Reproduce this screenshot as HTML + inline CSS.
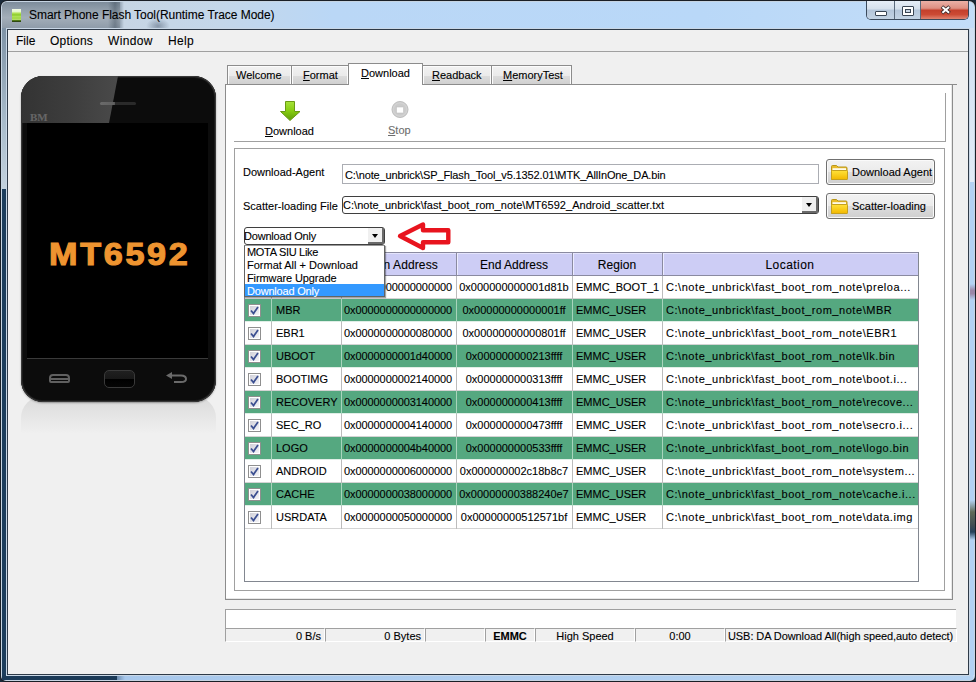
<!DOCTYPE html>
<html><head><meta charset="utf-8">
<style>
*{margin:0;padding:0;box-sizing:border-box}
html,body{width:976px;height:682px;overflow:hidden;background:#1a2a3a}
body{position:relative;font-family:"Liberation Sans",sans-serif;font-size:11px;color:#000}
.a{position:absolute}
.t{position:absolute;white-space:nowrap;line-height:1;-webkit-text-stroke:0.1px currentColor}
</style></head><body>

<!-- window frame -->
<div class="a" id="frame" style="left:0;top:0;width:976px;height:682px;border-radius:7px 7px 6px 6px;background:#1a1f26"></div>
<div class="a" style="left:1px;top:1px;width:974px;height:680px;border-radius:6px 6px 5px 5px;background:#c6d4e2"></div>
<!-- glass -->
<div class="a" id="glass" style="left:2px;top:2px;width:972px;height:678px;border-radius:5px 5px 4px 4px;
 background:linear-gradient(90deg,#7f909f 0px,#8e9dab 60px,#95a3b0 108px,#6f7f8f 115px,#c6d5e4 122px,#c4d7ea 220px,#bad7f6 330px,#b9d8f8 700px,#c3ddf8 976px)"></div>
<div class="a" style="left:2px;top:2px;width:118px;height:26px;border-radius:5px 0 0 0;background:linear-gradient(90deg,rgba(0,0,0,0) 0,rgba(0,0,0,0) 106px,rgba(40,55,70,.35) 113px,rgba(40,55,70,0) 120px),linear-gradient(#7d8c9b 0,#95a2ae 35%,#a3aeb9 60%,#8f9ca9 100%)"></div>
<div class="a" style="left:146px;top:18px;width:24px;height:10px;background:radial-gradient(ellipse at 50% 80%,rgba(60,75,95,.45),rgba(60,75,95,0) 70%)"></div>
<!-- left & bottom-left dark glass -->
<div class="a" style="left:2px;top:28px;width:5px;height:161px;background:linear-gradient(#7f93a6,#a9bccb 60%,#c3d2de)"></div>
<div class="a" style="left:2px;top:189px;width:5px;height:491px;background:#1c3d5c"></div>
<div class="a" style="left:2px;top:675px;width:115px;height:5px;background:#1b3a58"></div>
<div class="a" style="left:117px;top:675px;width:856px;height:5px;background:linear-gradient(90deg,#6d8db0 0,#a8c8ec 8px,#b5d3f2 100%)"></div>
<div class="a" style="left:969px;top:28px;width:5px;height:154px;background:linear-gradient(#d0e0f2,#e2ecf7)"></div>
<div class="a" style="left:969px;top:182px;width:5px;height:493px;background:#b3d2f3"></div>

<div class="a" style="left:969px;top:284px;width:6px;height:16px;background:linear-gradient(#b3d2f3,#9a86a8 40%,#9a86a8 60%,#b3d2f3)"></div>
<div class="a" style="left:969px;top:500px;width:6px;height:40px;background:linear-gradient(#b3d2f3,#5e6a58 30%,#3e4a52 65%,#24405a 80%,#b3d2f3)"></div>
<!-- client area -->
<div class="a" id="client" style="left:6px;top:28px;width:964px;height:648px;border:1px solid #c9d7e6"></div>
<div class="a" style="left:7px;top:29px;width:962px;height:646px;border:1px solid #2e3a48;background:#f0f0f0"></div>

<!-- title -->
<div class="a" style="left:12px;top:9px;width:9px;height:13px;background:linear-gradient(#f2fbe6 0,#e4f6c8 22%,#b8e660 30%,#8ccc2a 45%,#b4e45c 60%,#9ad438 70%,#c0ea70 80%,#5c8a1a 86%,#1e3010 100%)"></div>
<div class="t" style="left:29px;top:9px;font-size:12px;color:#000;letter-spacing:-0.04px">Smart Phone Flash Tool(Runtime Trace Mode)</div>

<!-- menu -->
<div class="t" style="left:16px;top:35px;font-size:12px">File</div>
<div class="t" style="left:50px;top:35px;font-size:12px;letter-spacing:0.25px">Options</div>
<div class="t" style="left:108px;top:35px;font-size:12px;letter-spacing:0.35px">Window</div>
<div class="t" style="left:168px;top:35px;font-size:12px;letter-spacing:0.3px">Help</div>
<div class="a" style="left:8px;top:51px;width:960px;height:1px;background:#a0a0a0"></div>


<!-- caption buttons -->
<div class="a" style="left:866px;top:1px;width:103px;height:19px;border:1px solid #3b4a5c;border-top:none;border-radius:0 0 5px 5px;overflow:hidden">
 <div class="a" style="left:0;top:0;width:28px;height:18px;background:linear-gradient(#e6eef7 0,#d5e0ec 45%,#b4c6da 50%,#c3d3e4 100%);border-right:1px solid #5a6a7c"></div>
 <div class="a" style="left:28px;top:0;width:26px;height:18px;background:linear-gradient(#e6eef7 0,#d5e0ec 45%,#b4c6da 50%,#c3d3e4 100%);border-right:1px solid #5a6a7c"></div>
 <div class="a" style="left:54px;top:0;width:48px;height:18px;background:linear-gradient(#eab0a6 0,#de9082 40%,#c4402c 52%,#cc4a34 75%,#e08470 100%)"></div>
 <div class="a" style="left:8px;top:10px;width:12px;height:5px;background:#fff;border:1px solid #3a4654;border-radius:1px"></div>
 <div class="a" style="left:35px;top:5px;width:12px;height:10px;background:#fff;border:1px solid #3a4654;border-radius:1px"></div>
 <div class="a" style="left:38px;top:8px;width:6px;height:4px;background:#c9d6e4;border:1px solid #3a4654"></div>
 <svg class="a" style="left:73px;top:4px" width="12" height="11" viewBox="0 0 12 11"><path d="M1.9 1.6 L9.6 8.1 M9.6 1.6 L1.9 8.1" stroke="#3a2a2a" stroke-width="3.7" stroke-linecap="butt"/><path d="M2.4 2 L9.1 7.7 M9.1 2 L2.4 7.7" stroke="#fff" stroke-width="2.0" stroke-linecap="butt"/></svg>
</div>

<!-- phone -->
<div class="a" style="left:21px;top:396px;width:195px;height:38px;background:linear-gradient(#d8d8d8 0,#dedede 20%,#e6e6e6 55%,#f0f0f0 100%);border-radius:22px 22px 0 0"></div>
<div class="a" style="left:21px;top:76px;width:195px;height:326px;border-radius:22px;background:#0c0c0c;box-shadow:inset 0 0 0 1px #3a3a3a, inset 0 0 0 2px #1a1a1a, 0 1px 2px rgba(0,0,0,.35);overflow:hidden">
 <div class="a" style="left:0;top:0;width:98px;height:47px;background:linear-gradient(90deg,#333 0,#3d3d3d 50%,#4a4a4a 100%);clip-path:polygon(0 0,97px 0,88px 47px,0 47px)"></div>
 <div class="a" style="left:79px;top:26px;width:36px;height:3px;border-radius:2px;background:linear-gradient(90deg,#6a6a6a 0,#606060 40%,#2a2a2a 42%,#2a2a2a 100%)"></div>
 <div class="t" style="left:9px;top:36px;font-family:'Liberation Serif',serif;font-weight:bold;font-size:11px;color:#666">BM</div>
 <div class="a" style="left:6px;top:47px;width:181px;height:236px;background:#000;border-bottom:1px solid #3a3a3a"></div>
 <div class="t" style="left:28px;top:163px;font-weight:bold;font-size:30.5px;letter-spacing:2.4px;color:#ee9430;transform:scaleX(1.12);transform-origin:0 0;-webkit-text-stroke:1.1px #ee9430">MT6592</div>
 <!-- menu icon -->
 <div class="a" style="left:28px;top:298px;width:21px;height:9px;border:2px solid #606060;border-radius:4px 4px 2px 2px"></div>
 <div class="a" style="left:30px;top:302px;width:17px;height:2px;background:#606060"></div>
 <!-- home -->
 <div class="a" style="left:83px;top:294px;width:31px;height:18px;border:1px solid #3a3a3a;border-radius:5px;background:linear-gradient(#202020 0,#181818 50%,#000 52%,#050505 100%)"></div>
 <!-- back -->
 <svg class="a" style="left:144px;top:296px" width="24" height="12" viewBox="0 0 24 12"><path d="M5 3.5 H16 Q21 3.5 21 7 Q21 10 16 10 H9" fill="none" stroke="#6a6a6a" stroke-width="2"/><path d="M1 3.5 L7 0 L7 7 Z" fill="#6a6a6a"/></svg>
</div>


<!-- tabs -->
<div class="a" style="left:227px;top:65px;width:65px;height:20px;border:1px solid #8c8c8c;border-bottom:none;background:linear-gradient(#f2f2f2 0,#ebebeb 50%,#dddddd 51%,#cfcfcf 100%);box-shadow:inset 1px 1px 0 #fcfcfc,inset -1px 0 0 #fcfcfc"></div>
<div class="t" style="left:236px;top:70px;font-size:11px">Welcome</div>
<div class="a" style="left:292px;top:65px;width:57px;height:20px;border:1px solid #8c8c8c;border-bottom:none;border-left:none;background:linear-gradient(#f2f2f2 0,#ebebeb 50%,#dddddd 51%,#cfcfcf 100%);box-shadow:inset 1px 1px 0 #fcfcfc,inset -1px 0 0 #fcfcfc"></div>
<div class="t" style="left:303px;top:70px;font-size:11px"><u>F</u>ormat</div>
<div class="a" style="left:423px;top:65px;width:69px;height:20px;border:1px solid #8c8c8c;border-bottom:none;border-left:none;background:linear-gradient(#f2f2f2 0,#ebebeb 50%,#dddddd 51%,#cfcfcf 100%);box-shadow:inset 1px 1px 0 #fcfcfc,inset -1px 0 0 #fcfcfc"></div>
<div class="t" style="left:432px;top:70px;font-size:11px"><u>R</u>eadback</div>
<div class="a" style="left:492px;top:65px;width:80px;height:20px;border:1px solid #8c8c8c;border-bottom:none;border-left:none;background:linear-gradient(#f2f2f2 0,#ebebeb 50%,#dddddd 51%,#cfcfcf 100%);box-shadow:inset 1px 1px 0 #fcfcfc,inset -1px 0 0 #fcfcfc"></div>
<div class="t" style="left:503px;top:70px;font-size:11px"><u>M</u>emoryTest</div>

<!-- panel -->
<div class="a" style="left:225px;top:84px;width:728px;height:516px;border:1px solid #8c8c8c;background:#fff"></div>
<div class="a" style="left:226px;top:85px;width:726px;height:514px;border-right:1px solid #e8e8e8;border-bottom:1px solid #e8e8e8"></div>
<div class="a" style="left:953px;top:84px;width:4px;height:1px;background:#8c8c8c"></div>
<!-- selected tab -->
<div class="a" style="left:348px;top:63px;width:75px;height:22px;border:1px solid #8c8c8c;border-bottom:none;background:#fff"></div>
<div class="t" style="left:361px;top:68px;font-size:11px"><u>D</u>ownload</div>

<!-- toolbar -->
<div class="a" style="left:234px;top:141px;width:712px;height:1px;background:#a0a0a0"></div>
<div class="a" style="left:945px;top:93px;width:1px;height:49px;background:#a0a0a0"></div>
<svg class="a" style="left:280px;top:101px" width="21" height="21" viewBox="0 0 21 21">
 <defs><linearGradient id="ga" x1="0" y1="0" x2="0" y2="1"><stop offset="0" stop-color="#a6e23a"/><stop offset=".5" stop-color="#86cc10"/><stop offset="1" stop-color="#5e9c08"/></linearGradient></defs>
 <path d="M5.5 0.5 H14.5 V10.5 H20 L10 19.5 L0.5 10.5 H5.5 Z" fill="url(#ga)" stroke="#6a9a14" stroke-width="1"/>
</svg>
<div class="t" style="left:265px;top:126px;font-size:11px"><u>D</u>ownload</div>
<svg class="a" style="left:391px;top:101px" width="18" height="18" viewBox="0 0 18 18">
 <circle cx="9" cy="8.5" r="8" fill="#d2d2d2" stroke="#bdbdbd" stroke-width="1"/>
 <circle cx="9" cy="8.5" r="6" fill="#cbcbcb"/>
 <rect x="5.5" y="6" width="7" height="6" fill="#fff" stroke="#c0c0c0" stroke-width=".6"/>
</svg>
<div class="t" style="left:388px;top:125px;font-size:11px;color:#6d6d6d"><u>S</u>top</div>

<!-- form group -->
<div class="a" style="left:234px;top:148px;width:711px;height:443px;border:1px solid #a0a0a0;border-top-color:#a0a0a0"></div>
<div class="t" style="left:243px;top:167px;font-size:11px">Download-Agent</div>
<div class="a" style="left:342px;top:164px;width:477px;height:20px;border:1px solid #abadb3;background:#fff;border-top-color:#abadb3"></div>
<div class="t" style="left:345px;top:170px;font-size:11px;letter-spacing:-0.13px">C:\note_unbrick\SP_Flash_Tool_v5.1352.01\MTK_AllInOne_DA.bin</div>
<div class="t" style="left:243px;top:201px;font-size:11px">Scatter-loading File</div>
<div class="a" style="left:342px;top:196px;width:477px;height:18px;border:1px solid #3f3f3f;border-radius:3px;background:#fff"></div>
<div class="t" style="left:343px;top:200px;font-size:11px;letter-spacing:0.04px">C:\note_unbrick\fast_boot_rom_note\MT6592_Android_scatter.txt</div>
<div class="a" style="left:802px;top:197px;width:16px;height:16px;background:#f0f0f0;border-right:2px solid #6a6a6a;border-bottom:2px solid #6a6a6a;border-radius:0 0 2px 0"></div>
<div class="a" style="left:806px;top:203px;width:0;height:0;border-left:3.5px solid transparent;border-right:3.5px solid transparent;border-top:4px solid #000"></div>

<!-- buttons -->
<div class="a" style="left:826px;top:159px;width:109px;height:26px;border:1px solid #707070;border-radius:3px;background:linear-gradient(#f2f2f2 0,#ebebeb 50%,#dddddd 51%,#cfcfcf 100%);box-shadow:inset 0 0 0 1px #fafafa"></div>
<div class="a" style="left:826px;top:193px;width:109px;height:26px;border:1px solid #707070;border-radius:3px;background:linear-gradient(#f2f2f2 0,#ebebeb 50%,#dddddd 51%,#cfcfcf 100%);box-shadow:inset 0 0 0 1px #fafafa"></div>
<svg class="a" style="left:831px;top:165px" width="17" height="15" viewBox="0 0 17 15"><defs><linearGradient id="fg165" x1="0" y1="0" x2="0" y2="1"><stop offset="0" stop-color="#ffe23a"/><stop offset="1" stop-color="#f2b800"/></linearGradient></defs><path d="M0.5 1.5 Q0.5 0.5 1.5 0.5 H5.5 L7 2 H15 Q16 2 16 3 V14.5 H0.5 Z" fill="#eabc2a" stroke="#b8961a"/><rect x="1.5" y="3.2" width="13.5" height="2.3" fill="#fffbea"/><rect x="0.5" y="5.5" width="16" height="9" rx="0.8" fill="url(#fg165)" stroke="#c4a020"/></svg>
<svg class="a" style="left:831px;top:199px" width="17" height="15" viewBox="0 0 17 15"><defs><linearGradient id="fg199" x1="0" y1="0" x2="0" y2="1"><stop offset="0" stop-color="#ffe23a"/><stop offset="1" stop-color="#f2b800"/></linearGradient></defs><path d="M0.5 1.5 Q0.5 0.5 1.5 0.5 H5.5 L7 2 H15 Q16 2 16 3 V14.5 H0.5 Z" fill="#eabc2a" stroke="#b8961a"/><rect x="1.5" y="3.2" width="13.5" height="2.3" fill="#fffbea"/><rect x="0.5" y="5.5" width="16" height="9" rx="0.8" fill="url(#fg199)" stroke="#c4a020"/></svg>
<div class="t" style="left:852px;top:167px;font-size:11px">Download Agent</div>
<div class="t" style="left:852px;top:201px;font-size:11px">Scatter-loading</div>

<svg width="0" height="0" style="position:absolute"><defs><linearGradient id="cbg" x1="0" y1="0" x2="1" y2="1"><stop offset="0" stop-color="#d0d0d8"/><stop offset="1" stop-color="#f4f4f8"/></linearGradient></defs></svg>
<!-- table -->
<div class="a" style="left:244px;top:252px;width:675px;height:330px;border:1px solid #828790;background:#fff"></div>
<div class="a" style="left:245px;top:252px;width:673px;height:24px;background:#cdcdf5;border-top:1px solid #8a8aa0;border-bottom:1px solid #8a8aa0"></div>
<div class="a" style="left:245px;top:253px;width:673px;height:1px;background:#e4e4fc"></div>
<div class="a" style="left:271px;top:253px;width:1px;height:22px;background:#8a8aa0"></div>
<div class="a" style="left:272px;top:253px;width:1px;height:22px;background:#ececff"></div>
<div class="a" style="left:341px;top:253px;width:1px;height:22px;background:#8a8aa0"></div>
<div class="a" style="left:342px;top:253px;width:1px;height:22px;background:#ececff"></div>
<div class="a" style="left:456px;top:253px;width:1px;height:22px;background:#8a8aa0"></div>
<div class="a" style="left:457px;top:253px;width:1px;height:22px;background:#ececff"></div>
<div class="a" style="left:572px;top:253px;width:1px;height:22px;background:#8a8aa0"></div>
<div class="a" style="left:573px;top:253px;width:1px;height:22px;background:#ececff"></div>
<div class="a" style="left:662px;top:253px;width:1px;height:22px;background:#8a8aa0"></div>
<div class="a" style="left:663px;top:253px;width:1px;height:22px;background:#ececff"></div>
<div class="t" style="left:271px;width:70px;text-align:center;top:259px;font-size:12px;letter-spacing:0px">Name</div>
<div class="t" style="left:341px;width:115px;text-align:center;top:259px;font-size:12px;letter-spacing:0.1px">Begin Address</div>
<div class="t" style="left:456px;width:116px;text-align:center;top:259px;font-size:12px;letter-spacing:0px">End Address</div>
<div class="t" style="left:572px;width:90px;text-align:center;top:259px;font-size:12px;letter-spacing:0.1px">Region</div>
<div class="t" style="left:662px;width:256px;text-align:center;top:259px;font-size:12px;letter-spacing:0.45px">Location</div>
<div class="a" style="left:245px;top:298px;width:673px;height:1px;background:#d4d4d4"></div>
<div class="a" style="left:271px;top:276px;width:1px;height:23px;background:#bcbcbc"></div>
<div class="a" style="left:341px;top:276px;width:1px;height:23px;background:#bcbcbc"></div>
<div class="a" style="left:456px;top:276px;width:1px;height:23px;background:#bcbcbc"></div>
<div class="a" style="left:572px;top:276px;width:1px;height:23px;background:#bcbcbc"></div>
<div class="a" style="left:662px;top:276px;width:1px;height:23px;background:#bcbcbc"></div>
<div class="a" style="left:248px;top:281px;width:13px;height:13px"><svg width="13" height="13" viewBox="0 0 13 13"><rect x="0.5" y="0.5" width="12" height="12" fill="#fff" stroke="#8f8f8f"/><rect x="2" y="2" width="9" height="9" fill="url(#cbg)"/><path d="M3 6.5 L5.5 9.5 L10 3" fill="none" stroke="#3b4f91" stroke-width="1.8"/></svg></div>
<div class="t" style="left:276px;top:282px">PRELOADER</div>
<div class="t" style="left:344px;top:282px;letter-spacing:-0.08px">0x0000000000000000</div>
<div class="t" style="left:456px;width:116px;text-align:center;top:282px;letter-spacing:0px">0x000000000001d81b</div>
<div class="t" style="left:576px;top:282px">EMMC_BOOT_1</div>
<div class="t" style="left:666px;top:282px;letter-spacing:0.55px">C:\note_unbrick\fast_boot_rom_note\preloa...</div>
<div class="a" style="left:245px;top:299px;width:673px;height:22px;background:#55a880"></div>
<div class="a" style="left:245px;top:321px;width:673px;height:1px;background:#dfeee6"></div>
<div class="a" style="left:271px;top:299px;width:1px;height:23px;background:#a8d4bc"></div>
<div class="a" style="left:341px;top:299px;width:1px;height:23px;background:#a8d4bc"></div>
<div class="a" style="left:456px;top:299px;width:1px;height:23px;background:#a8d4bc"></div>
<div class="a" style="left:572px;top:299px;width:1px;height:23px;background:#a8d4bc"></div>
<div class="a" style="left:662px;top:299px;width:1px;height:23px;background:#a8d4bc"></div>
<div class="a" style="left:248px;top:304px;width:13px;height:13px"><svg width="13" height="13" viewBox="0 0 13 13"><rect x="0.5" y="0.5" width="12" height="12" fill="#fff" stroke="#8f8f8f"/><rect x="2" y="2" width="9" height="9" fill="url(#cbg)"/><path d="M3 6.5 L5.5 9.5 L10 3" fill="none" stroke="#3b4f91" stroke-width="1.8"/></svg></div>
<div class="t" style="left:276px;top:305px">MBR</div>
<div class="t" style="left:344px;top:305px;letter-spacing:-0.08px">0x0000000000000000</div>
<div class="t" style="left:456px;width:116px;text-align:center;top:305px;letter-spacing:0px">0x00000000000001ff</div>
<div class="t" style="left:576px;top:305px">EMMC_USER</div>
<div class="t" style="left:666px;top:305px;letter-spacing:0.55px">C:\note_unbrick\fast_boot_rom_note\MBR</div>
<div class="a" style="left:245px;top:344px;width:673px;height:1px;background:#d4d4d4"></div>
<div class="a" style="left:271px;top:322px;width:1px;height:23px;background:#bcbcbc"></div>
<div class="a" style="left:341px;top:322px;width:1px;height:23px;background:#bcbcbc"></div>
<div class="a" style="left:456px;top:322px;width:1px;height:23px;background:#bcbcbc"></div>
<div class="a" style="left:572px;top:322px;width:1px;height:23px;background:#bcbcbc"></div>
<div class="a" style="left:662px;top:322px;width:1px;height:23px;background:#bcbcbc"></div>
<div class="a" style="left:248px;top:327px;width:13px;height:13px"><svg width="13" height="13" viewBox="0 0 13 13"><rect x="0.5" y="0.5" width="12" height="12" fill="#fff" stroke="#8f8f8f"/><rect x="2" y="2" width="9" height="9" fill="url(#cbg)"/><path d="M3 6.5 L5.5 9.5 L10 3" fill="none" stroke="#3b4f91" stroke-width="1.8"/></svg></div>
<div class="t" style="left:276px;top:328px">EBR1</div>
<div class="t" style="left:344px;top:328px;letter-spacing:-0.08px">0x0000000000080000</div>
<div class="t" style="left:456px;width:116px;text-align:center;top:328px;letter-spacing:0px">0x00000000000801ff</div>
<div class="t" style="left:576px;top:328px">EMMC_USER</div>
<div class="t" style="left:666px;top:328px;letter-spacing:0.55px">C:\note_unbrick\fast_boot_rom_note\EBR1</div>
<div class="a" style="left:245px;top:345px;width:673px;height:22px;background:#55a880"></div>
<div class="a" style="left:245px;top:367px;width:673px;height:1px;background:#dfeee6"></div>
<div class="a" style="left:271px;top:345px;width:1px;height:23px;background:#a8d4bc"></div>
<div class="a" style="left:341px;top:345px;width:1px;height:23px;background:#a8d4bc"></div>
<div class="a" style="left:456px;top:345px;width:1px;height:23px;background:#a8d4bc"></div>
<div class="a" style="left:572px;top:345px;width:1px;height:23px;background:#a8d4bc"></div>
<div class="a" style="left:662px;top:345px;width:1px;height:23px;background:#a8d4bc"></div>
<div class="a" style="left:248px;top:350px;width:13px;height:13px"><svg width="13" height="13" viewBox="0 0 13 13"><rect x="0.5" y="0.5" width="12" height="12" fill="#fff" stroke="#8f8f8f"/><rect x="2" y="2" width="9" height="9" fill="url(#cbg)"/><path d="M3 6.5 L5.5 9.5 L10 3" fill="none" stroke="#3b4f91" stroke-width="1.8"/></svg></div>
<div class="t" style="left:276px;top:351px">UBOOT</div>
<div class="t" style="left:344px;top:351px;letter-spacing:-0.08px">0x0000000001d40000</div>
<div class="t" style="left:456px;width:116px;text-align:center;top:351px;letter-spacing:0px">0x000000000213ffff</div>
<div class="t" style="left:576px;top:351px">EMMC_USER</div>
<div class="t" style="left:666px;top:351px;letter-spacing:0.55px">C:\note_unbrick\fast_boot_rom_note\lk.bin</div>
<div class="a" style="left:245px;top:390px;width:673px;height:1px;background:#d4d4d4"></div>
<div class="a" style="left:271px;top:368px;width:1px;height:23px;background:#bcbcbc"></div>
<div class="a" style="left:341px;top:368px;width:1px;height:23px;background:#bcbcbc"></div>
<div class="a" style="left:456px;top:368px;width:1px;height:23px;background:#bcbcbc"></div>
<div class="a" style="left:572px;top:368px;width:1px;height:23px;background:#bcbcbc"></div>
<div class="a" style="left:662px;top:368px;width:1px;height:23px;background:#bcbcbc"></div>
<div class="a" style="left:248px;top:373px;width:13px;height:13px"><svg width="13" height="13" viewBox="0 0 13 13"><rect x="0.5" y="0.5" width="12" height="12" fill="#fff" stroke="#8f8f8f"/><rect x="2" y="2" width="9" height="9" fill="url(#cbg)"/><path d="M3 6.5 L5.5 9.5 L10 3" fill="none" stroke="#3b4f91" stroke-width="1.8"/></svg></div>
<div class="t" style="left:276px;top:374px">BOOTIMG</div>
<div class="t" style="left:344px;top:374px;letter-spacing:-0.08px">0x0000000002140000</div>
<div class="t" style="left:456px;width:116px;text-align:center;top:374px;letter-spacing:0px">0x000000000313ffff</div>
<div class="t" style="left:576px;top:374px">EMMC_USER</div>
<div class="t" style="left:666px;top:374px;letter-spacing:0.55px">C:\note_unbrick\fast_boot_rom_note\boot.i...</div>
<div class="a" style="left:245px;top:391px;width:673px;height:22px;background:#55a880"></div>
<div class="a" style="left:245px;top:413px;width:673px;height:1px;background:#dfeee6"></div>
<div class="a" style="left:271px;top:391px;width:1px;height:23px;background:#a8d4bc"></div>
<div class="a" style="left:341px;top:391px;width:1px;height:23px;background:#a8d4bc"></div>
<div class="a" style="left:456px;top:391px;width:1px;height:23px;background:#a8d4bc"></div>
<div class="a" style="left:572px;top:391px;width:1px;height:23px;background:#a8d4bc"></div>
<div class="a" style="left:662px;top:391px;width:1px;height:23px;background:#a8d4bc"></div>
<div class="a" style="left:248px;top:396px;width:13px;height:13px"><svg width="13" height="13" viewBox="0 0 13 13"><rect x="0.5" y="0.5" width="12" height="12" fill="#fff" stroke="#8f8f8f"/><rect x="2" y="2" width="9" height="9" fill="url(#cbg)"/><path d="M3 6.5 L5.5 9.5 L10 3" fill="none" stroke="#3b4f91" stroke-width="1.8"/></svg></div>
<div class="t" style="left:276px;top:397px">RECOVERY</div>
<div class="t" style="left:344px;top:397px;letter-spacing:-0.08px">0x0000000003140000</div>
<div class="t" style="left:456px;width:116px;text-align:center;top:397px;letter-spacing:0px">0x000000000413ffff</div>
<div class="t" style="left:576px;top:397px">EMMC_USER</div>
<div class="t" style="left:666px;top:397px;letter-spacing:0.55px">C:\note_unbrick\fast_boot_rom_note\recove...</div>
<div class="a" style="left:245px;top:436px;width:673px;height:1px;background:#d4d4d4"></div>
<div class="a" style="left:271px;top:414px;width:1px;height:23px;background:#bcbcbc"></div>
<div class="a" style="left:341px;top:414px;width:1px;height:23px;background:#bcbcbc"></div>
<div class="a" style="left:456px;top:414px;width:1px;height:23px;background:#bcbcbc"></div>
<div class="a" style="left:572px;top:414px;width:1px;height:23px;background:#bcbcbc"></div>
<div class="a" style="left:662px;top:414px;width:1px;height:23px;background:#bcbcbc"></div>
<div class="a" style="left:248px;top:419px;width:13px;height:13px"><svg width="13" height="13" viewBox="0 0 13 13"><rect x="0.5" y="0.5" width="12" height="12" fill="#fff" stroke="#8f8f8f"/><rect x="2" y="2" width="9" height="9" fill="url(#cbg)"/><path d="M3 6.5 L5.5 9.5 L10 3" fill="none" stroke="#3b4f91" stroke-width="1.8"/></svg></div>
<div class="t" style="left:276px;top:420px">SEC_RO</div>
<div class="t" style="left:344px;top:420px;letter-spacing:-0.08px">0x0000000004140000</div>
<div class="t" style="left:456px;width:116px;text-align:center;top:420px;letter-spacing:0px">0x000000000473ffff</div>
<div class="t" style="left:576px;top:420px">EMMC_USER</div>
<div class="t" style="left:666px;top:420px;letter-spacing:0.55px">C:\note_unbrick\fast_boot_rom_note\secro.i...</div>
<div class="a" style="left:245px;top:437px;width:673px;height:22px;background:#55a880"></div>
<div class="a" style="left:245px;top:459px;width:673px;height:1px;background:#dfeee6"></div>
<div class="a" style="left:271px;top:437px;width:1px;height:23px;background:#a8d4bc"></div>
<div class="a" style="left:341px;top:437px;width:1px;height:23px;background:#a8d4bc"></div>
<div class="a" style="left:456px;top:437px;width:1px;height:23px;background:#a8d4bc"></div>
<div class="a" style="left:572px;top:437px;width:1px;height:23px;background:#a8d4bc"></div>
<div class="a" style="left:662px;top:437px;width:1px;height:23px;background:#a8d4bc"></div>
<div class="a" style="left:248px;top:442px;width:13px;height:13px"><svg width="13" height="13" viewBox="0 0 13 13"><rect x="0.5" y="0.5" width="12" height="12" fill="#fff" stroke="#8f8f8f"/><rect x="2" y="2" width="9" height="9" fill="url(#cbg)"/><path d="M3 6.5 L5.5 9.5 L10 3" fill="none" stroke="#3b4f91" stroke-width="1.8"/></svg></div>
<div class="t" style="left:276px;top:443px">LOGO</div>
<div class="t" style="left:344px;top:443px;letter-spacing:-0.08px">0x0000000004b40000</div>
<div class="t" style="left:456px;width:116px;text-align:center;top:443px;letter-spacing:0px">0x000000000533ffff</div>
<div class="t" style="left:576px;top:443px">EMMC_USER</div>
<div class="t" style="left:666px;top:443px;letter-spacing:0.55px">C:\note_unbrick\fast_boot_rom_note\logo.bin</div>
<div class="a" style="left:245px;top:482px;width:673px;height:1px;background:#d4d4d4"></div>
<div class="a" style="left:271px;top:460px;width:1px;height:23px;background:#bcbcbc"></div>
<div class="a" style="left:341px;top:460px;width:1px;height:23px;background:#bcbcbc"></div>
<div class="a" style="left:456px;top:460px;width:1px;height:23px;background:#bcbcbc"></div>
<div class="a" style="left:572px;top:460px;width:1px;height:23px;background:#bcbcbc"></div>
<div class="a" style="left:662px;top:460px;width:1px;height:23px;background:#bcbcbc"></div>
<div class="a" style="left:248px;top:465px;width:13px;height:13px"><svg width="13" height="13" viewBox="0 0 13 13"><rect x="0.5" y="0.5" width="12" height="12" fill="#fff" stroke="#8f8f8f"/><rect x="2" y="2" width="9" height="9" fill="url(#cbg)"/><path d="M3 6.5 L5.5 9.5 L10 3" fill="none" stroke="#3b4f91" stroke-width="1.8"/></svg></div>
<div class="t" style="left:276px;top:466px">ANDROID</div>
<div class="t" style="left:344px;top:466px;letter-spacing:-0.08px">0x0000000006000000</div>
<div class="t" style="left:456px;width:116px;text-align:center;top:466px;letter-spacing:0px">0x000000002c18b8c7</div>
<div class="t" style="left:576px;top:466px">EMMC_USER</div>
<div class="t" style="left:666px;top:466px;letter-spacing:0.55px">C:\note_unbrick\fast_boot_rom_note\system...</div>
<div class="a" style="left:245px;top:483px;width:673px;height:22px;background:#55a880"></div>
<div class="a" style="left:245px;top:505px;width:673px;height:1px;background:#dfeee6"></div>
<div class="a" style="left:271px;top:483px;width:1px;height:23px;background:#a8d4bc"></div>
<div class="a" style="left:341px;top:483px;width:1px;height:23px;background:#a8d4bc"></div>
<div class="a" style="left:456px;top:483px;width:1px;height:23px;background:#a8d4bc"></div>
<div class="a" style="left:572px;top:483px;width:1px;height:23px;background:#a8d4bc"></div>
<div class="a" style="left:662px;top:483px;width:1px;height:23px;background:#a8d4bc"></div>
<div class="a" style="left:248px;top:488px;width:13px;height:13px"><svg width="13" height="13" viewBox="0 0 13 13"><rect x="0.5" y="0.5" width="12" height="12" fill="#fff" stroke="#8f8f8f"/><rect x="2" y="2" width="9" height="9" fill="url(#cbg)"/><path d="M3 6.5 L5.5 9.5 L10 3" fill="none" stroke="#3b4f91" stroke-width="1.8"/></svg></div>
<div class="t" style="left:276px;top:489px">CACHE</div>
<div class="t" style="left:344px;top:489px;letter-spacing:-0.08px">0x0000000038000000</div>
<div class="t" style="left:456px;width:116px;text-align:center;top:489px;letter-spacing:0px">0x00000000388240e7</div>
<div class="t" style="left:576px;top:489px">EMMC_USER</div>
<div class="t" style="left:666px;top:489px;letter-spacing:0.55px">C:\note_unbrick\fast_boot_rom_note\cache.i...</div>
<div class="a" style="left:245px;top:528px;width:673px;height:1px;background:#d4d4d4"></div>
<div class="a" style="left:271px;top:506px;width:1px;height:23px;background:#bcbcbc"></div>
<div class="a" style="left:341px;top:506px;width:1px;height:23px;background:#bcbcbc"></div>
<div class="a" style="left:456px;top:506px;width:1px;height:23px;background:#bcbcbc"></div>
<div class="a" style="left:572px;top:506px;width:1px;height:23px;background:#bcbcbc"></div>
<div class="a" style="left:662px;top:506px;width:1px;height:23px;background:#bcbcbc"></div>
<div class="a" style="left:248px;top:511px;width:13px;height:13px"><svg width="13" height="13" viewBox="0 0 13 13"><rect x="0.5" y="0.5" width="12" height="12" fill="#fff" stroke="#8f8f8f"/><rect x="2" y="2" width="9" height="9" fill="url(#cbg)"/><path d="M3 6.5 L5.5 9.5 L10 3" fill="none" stroke="#3b4f91" stroke-width="1.8"/></svg></div>
<div class="t" style="left:276px;top:512px">USRDATA</div>
<div class="t" style="left:344px;top:512px;letter-spacing:-0.08px">0x0000000050000000</div>
<div class="t" style="left:456px;width:116px;text-align:center;top:512px;letter-spacing:0px">0x00000000512571bf</div>
<div class="t" style="left:576px;top:512px">EMMC_USER</div>
<div class="t" style="left:666px;top:512px;letter-spacing:0.55px">C:\note_unbrick\fast_boot_rom_note\data.img</div>
<!-- combo download only -->
<div class="a" style="left:244px;top:227px;width:141px;height:18px;border:1px solid #3f3f3f;border-radius:3px;background:#fff"></div>
<div class="t" style="left:244px;top:231px;font-size:11px;letter-spacing:-0.2px">Download Only</div>
<div class="a" style="left:368px;top:228px;width:16px;height:16px;background:#f0f0f0;border-right:2px solid #6a6a6a;border-bottom:2px solid #6a6a6a;border-radius:0 0 2px 0"></div>
<div class="a" style="left:372px;top:234px;width:0;height:0;border-left:3.5px solid transparent;border-right:3.5px solid transparent;border-top:4px solid #000"></div>

<!-- red arrow -->
<svg class="a" style="left:390px;top:218px" width="66" height="38" viewBox="390 218 66 38">
 <path d="M400 236 L423 224.5 L423 230.2 L448.3 230.2 L448.3 242.3 L423 242.3 L423 248 Z" fill="none" stroke="#e8141e" stroke-width="4.4" stroke-linejoin="round"/>
</svg>

<!-- dropdown list -->
<div class="a" style="left:244px;top:245px;width:141px;height:52px;background:#fff;border:1px solid #646464;border-top-color:#9a9a9a;box-shadow:1px 1px 1px rgba(0,0,0,.35)"></div>
<div class="a" style="left:245px;top:284px;width:139px;height:12px;background:#3399ff"></div>
<div class="t" style="left:247px;top:247px;font-size:11px;letter-spacing:-0.3px">MOTA SIU Like</div>
<div class="t" style="left:247px;top:260px;font-size:11px;letter-spacing:0px">Format All + Download</div>
<div class="t" style="left:247px;top:273px;font-size:11px;letter-spacing:-0.1px">Firmware Upgrade</div>
<div class="t" style="left:247px;top:286px;font-size:11px;letter-spacing:-0.2px;color:#fff">Download Only</div>

<!-- progress + status -->
<div class="a" style="left:225px;top:609px;width:731px;height:19px;background:#fff;border-top:1px solid #a0a0a0;border-left:1px solid #a0a0a0"></div>
<div class="a" style="left:225px;top:628px;width:100px;height:14px;border-top:1px solid #a0a0a0;border-left:1px solid #a0a0a0;border-bottom:1px solid #fff;border-right:1px solid #fff;background:#f0f0f0"></div>
<div class="t" style="left:225px;width:100px;text-align:right;padding-right:4px;top:631px;font-size:11px">0 B/s</div>
<div class="a" style="left:325px;top:628px;width:100px;height:14px;border-top:1px solid #a0a0a0;border-left:1px solid #a0a0a0;border-bottom:1px solid #fff;border-right:1px solid #fff;background:#f0f0f0"></div>
<div class="t" style="left:325px;width:100px;text-align:right;padding-right:4px;top:631px;font-size:11px">0 Bytes</div>
<div class="a" style="left:425px;top:628px;width:60px;height:14px;border-top:1px solid #a0a0a0;border-left:1px solid #a0a0a0;border-bottom:1px solid #fff;border-right:1px solid #fff;background:#f0f0f0"></div>
<div class="a" style="left:485px;top:628px;width:50px;height:14px;border-top:1px solid #a0a0a0;border-left:1px solid #a0a0a0;border-bottom:1px solid #fff;border-right:1px solid #fff;background:#f0f0f0"></div>
<div class="t" style="left:485px;width:50px;text-align:center;top:631px;font-size:11px"><b>EMMC</b></div>
<div class="a" style="left:535px;top:628px;width:100px;height:14px;border-top:1px solid #a0a0a0;border-left:1px solid #a0a0a0;border-bottom:1px solid #fff;border-right:1px solid #fff;background:#f0f0f0"></div>
<div class="t" style="left:535px;width:100px;text-align:center;top:631px;font-size:11px">High Speed</div>
<div class="a" style="left:635px;top:628px;width:90px;height:14px;border-top:1px solid #a0a0a0;border-left:1px solid #a0a0a0;border-bottom:1px solid #fff;border-right:1px solid #fff;background:#f0f0f0"></div>
<div class="t" style="left:635px;width:90px;text-align:center;top:631px;font-size:11px">0:00</div>
<div class="a" style="left:725px;top:628px;width:232px;height:14px;border-top:1px solid #a0a0a0;border-left:1px solid #a0a0a0;border-bottom:1px solid #fff;border-right:1px solid #fff;background:#f0f0f0"></div>
<div class="t" style="left:725px;width:232px;text-align:left;padding-left:3px;top:631px;font-size:11px;letter-spacing:-0.08px">USB: DA Download All(high speed,auto detect)</div>

</body></html>
